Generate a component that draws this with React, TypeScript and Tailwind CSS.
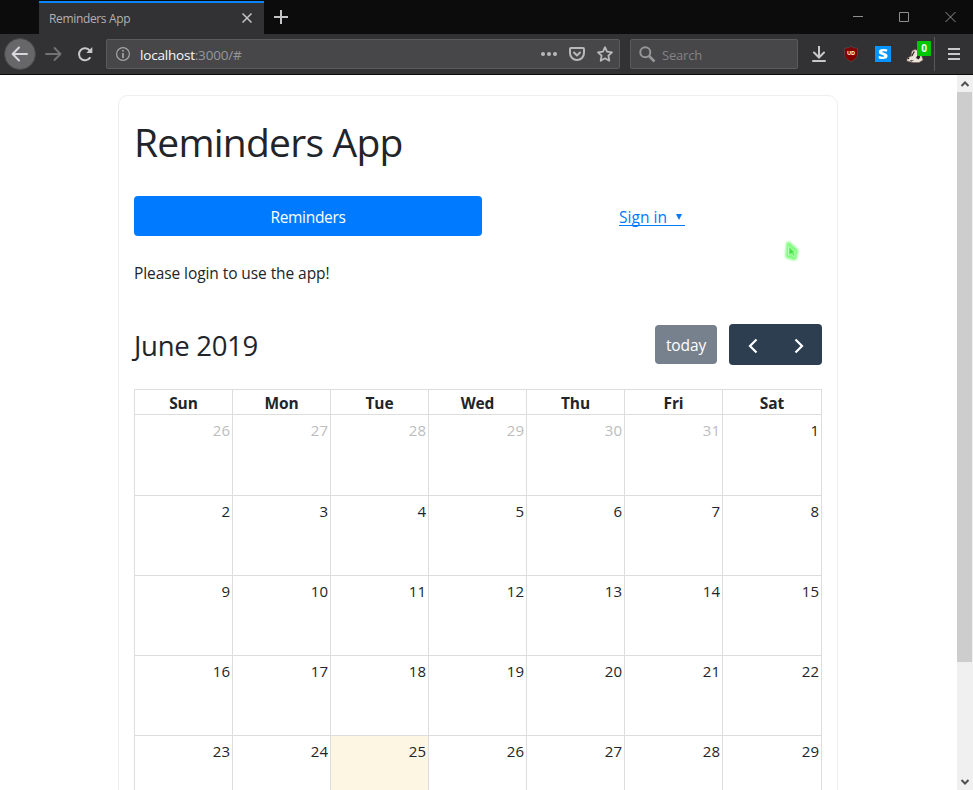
import React from "react";

const days = ["Sun", "Mon", "Tue", "Wed", "Thu", "Fri", "Sat"];
const weeks = [
  [26, 27, 28, 29, 30, 31, 1],
  [2, 3, 4, 5, 6, 7, 8],
  [9, 10, 11, 12, 13, 14, 15],
  [16, 17, 18, 19, 20, 21, 22],
  [23, 24, 25, 26, 27, 28, 29],
];

function TabStrip() {
  return (
    <div className="flex h-[34px] shrink-0 bg-[#0c0c0d]">
      <div className="ml-[39px] mt-px flex h-[33px] w-[225px] items-center justify-between border-t-2 border-[#0a84ff] bg-[#323234] pl-[10px] pr-3 text-[12px] text-[#b1b1b3]">
        <span className="tracking-[-0.35px]">Reminders App</span>
        <svg className="-mt-0.5" width="10" height="10" viewBox="0 0 10 10" stroke="#c4c4c6" strokeWidth="1.5">
          <path d="M.5.5l9 9M9.5.5l-9 9" />
        </svg>
      </div>
      <svg className="ml-[10px] mt-[10px]" width="14" height="14" viewBox="0 0 14 14" stroke="#c4c4c6" strokeWidth="2">
        <path d="M7 0v14M0 7h14" />
      </svg>
      <div className="ml-auto flex items-start">
        <svg className="mt-[11px] mr-[17px]" width="103" height="12" viewBox="0 0 103 12" fill="none" stroke="#8f8f90">
          <path d="M0 5.5h10" />
          <path d="M46.500 1.500h9v9h-9z" />
          <path d="M92.500 1l10 10M102.500 1l-10 10" />
        </svg>
      </div>
    </div>
  );
}

function Toolbar() {
  return (
    <div className="flex h-[41px] shrink-0 items-center border-b border-[#0c0c0d] bg-[#323234]">
      <div className="ml-1 flex size-8 items-center justify-center rounded-full border border-[#474749] bg-[#67676a]">
        <svg width="18" height="16" viewBox="0 0 18 16" fill="none" stroke="#d7d7db" strokeWidth="2" strokeLinecap="round" strokeLinejoin="round">
          <path d="M16 8H2M8 1.500L1.600 8L8 14.500" />
        </svg>
      </div>
      <svg className="ml-[9px]" width="18" height="16" viewBox="0 0 18 16" fill="none" stroke="#727274" strokeWidth="2" strokeLinecap="round" strokeLinejoin="round">
        <path d="M1 8h14M9.500 2L15.500 8L9.500 14" />
      </svg>
      <svg className="ml-[14px]" width="16" height="16" viewBox="0 0 16 16" fill="none" stroke="#c9c9cb" strokeWidth="2">
        <path d="M13.300 11.200A6 6 0 1 1 12.800 4.600" />
        <path d="M15.300 1v6H9.300z" fill="#c9c9cb" stroke="none" />
      </svg>
      <div className="ml-[13px] flex h-[30px] w-[514px] items-center rounded-[2px] border border-[#5b5b5d] bg-[#474749] pl-[9px] pr-[6px]">
        <svg width="14" height="14" viewBox="0 0 14 14" fill="none" stroke="#a5a5a7" strokeWidth="1.200">
          <circle cx="7" cy="7" r="6.400" />
          <path d="M7 3v1.600M7 6v5" strokeWidth="1.700" />
        </svg>
        <span className="ml-[10px] mt-[2px] text-[13.500px] tracking-[-0.2px] text-[#97979a]">
          <span className="text-[#f9f9fa]">localhost</span>:3000/#
        </span>
        <svg className="ml-auto" width="16" height="16" viewBox="0 0 16 16" fill="#b9b9bb">
          <circle cx="2" cy="8" r="2" />
          <circle cx="8" cy="8" r="2" />
          <circle cx="14" cy="8" r="2" />
        </svg>
        <svg className="ml-3" width="16" height="16" viewBox="0 0 16 16" fill="none" stroke="#b9b9bb" strokeWidth="2" strokeLinecap="round" strokeLinejoin="round">
          <path d="M2 2h12q1 0 1 1v4A7 7 0 0 1 1 7V3q0-1 1-1z" />
          <path d="M5 6.500l3 3l3-3" />
        </svg>
        <svg className="ml-3" width="16" height="16" viewBox="0 0 16 16" fill="none" stroke="#b9b9bb" strokeWidth="1.800" strokeLinejoin="round">
          <path d="M8 1.200l2 4.500l5 .6l-3.600 3.400l.9 5L8 12.300l-4.300 2.400l.9-5L1 6.300l5-.6z" />
        </svg>
      </div>
      <div className="ml-[10px] flex h-[30px] w-[168px] items-center rounded-[2px] border border-[#5b5b5d] bg-[#474749] pl-2">
        <svg width="17" height="17" viewBox="0 0 17 17" fill="none" stroke="#97979a" strokeWidth="2">
          <circle cx="6.300" cy="6.300" r="5" />
          <path d="M10 10l5.500 5.500" strokeWidth="2.500" />
        </svg>
        <span className="ml-[6px] mt-[3px] text-[13px] tracking-[-0.2px] text-[#828285]">Search</span>
      </div>
      <svg className="ml-[14px]" width="14" height="16" viewBox="0 0 14 16" fill="none" stroke="#c9c9cb" strokeWidth="2">
        <path d="M7 0v11M2 6.500L7 11.500L12 6.500M1 15h12" strokeLinecap="round" />
      </svg>
      <svg className="ml-[18px]" width="14" height="16" viewBox="0 0 14 16">
        <path d="M7 .4Q9.500 2.300 13.500 2.300V8Q13.500 13 7 15.600Q.5 13 .5 8V2.300Q4.500 2.300 7 .4z" fill="#800000" stroke="#555" strokeWidth=".6" />
        <text x="7" y="9.300" textAnchor="middle" fill="white" fontFamily="Open Sans, sans-serif" fontWeight="700" fontSize="5.500">UD</text>
      </svg>
      <div className="ml-[17px] flex size-4 items-center justify-center bg-[#0695ff] text-[14px] leading-none font-extrabold text-white">
        <span className="scale-x-125">S</span>
      </div>
      <div className="relative ml-4 h-[26px] w-6">
        <svg className="-ml-px mt-[7px]" width="18" height="16" viewBox="0 0 18 16">
          <path d="M1 10.500L5 8L6 3L9 1.500L13 3L16 9L17 12L13 14.500L7 14.500L1 13z" fill="#eae4dd" stroke="#8a6450" strokeWidth=".6" />
          <path d="M5 8.500L7.500 3.500L9 3.500L6.500 8zM10 10l2-4l2.500 3l-2 2.500z" fill="#2a2523" />
          <path d="M1 10.300l2.500-.5l-1 1.700zM4 12.300l4 .2l-3 .9z" fill="#171719" />
        </svg>
        <span className="absolute top-0 left-[10px] flex h-[15px] w-[14px] items-center justify-center rounded-[1px] bg-[#00c800] text-[10px] font-bold text-white">0</span>
      </div>
      <div className="ml-[3px] h-[34px] w-px bg-[#59595b]" />
      <svg className="ml-[13px]" width="12" height="12" viewBox="0 0 12 12" stroke="#c9c9cb" strokeWidth="2">
        <path d="M0 1h12M0 6h12M0 11h12" />
      </svg>
    </div>
  );
}

function Calendar() {
  return (
    <div className="mt-6 w-[688px] border-t border-l border-[#ddd]">
      <div className="grid h-[25px] grid-cols-[repeat(6,98px)_99px]">
        {days.map((d) => (
          <div key={d} className="border-r border-b border-[#ddd] pt-[3px] text-center text-[15.500px] leading-5 font-bold tracking-[-0.1px]">
            {d}
          </div>
        ))}
      </div>
      {weeks.map((week, row) => (
        <div key={row} className={`grid grid-cols-[repeat(6,98px)_99px] ${row === 0 ? "h-[81px]" : "h-20"}`}>
          {week.map((day, col) => (
            <div
              key={col}
              className={`border-r border-b border-[#ddd] pt-[3px] pr-0.5 text-right text-[15px] leading-6 ${row === 0 && col < 6 ? "text-[#bcbdbe]" : ""} ${day === 25 ? "bg-[#fdf6e3]" : ""}`}
            >
              {day}
            </div>
          ))}
        </div>
      ))}
    </div>
  );
}

function Scrollbar() {
  return (
    <div className="flex w-4 shrink-0 flex-col items-center bg-[#f0f0f0]">
      <svg className="h-[17px] w-4 shrink-0" viewBox="0 0 16 17" fill="none" stroke="#505050" strokeWidth="2">
        <path d="M4.500 11L8 7.500L11.500 11" />
      </svg>
      <div className="mr-px h-[570px] w-[15px] bg-[#cdcdcd]" />
      <svg className="mt-auto h-[17px] w-4 shrink-0" viewBox="0 0 16 17" fill="none" stroke="#505050" strokeWidth="2">
        <path d="M4.500 7L8 10.500L11.500 7" />
      </svg>
    </div>
  );
}

export default function App() {
  return (
    <div className="flex h-[790px] w-[973px] flex-col overflow-hidden bg-white font-['Open_Sans',sans-serif] text-[#212529]">
      <TabStrip />
      <Toolbar />
      <div className="flex min-h-0 flex-1">
        <main className="relative min-w-0 flex-1 overflow-hidden">
          <div className="ml-[118px] mt-5 h-[900px] w-[720px] rounded-[10px] border border-[#eee] px-[15px] pt-[22px]">
            <h1 className="text-[39px] leading-[48px] tracking-[-0.77px]">Reminders App</h1>
            <div className="mt-[30px] flex">
              <a className="flex h-10 w-[348px] items-center justify-center rounded-[4px] bg-[#007bff] pt-[3px] text-[15.500px] tracking-[-0.3px] text-white">Reminders</a>
              <div className="flex flex-1 items-center justify-center">
                <a className="mt-px flex h-[18px] items-center border-b border-[#007bff] text-[15.500px] tracking-[0px] text-[#007bff]">
                  <span className="mt-[3px]">Sign in</span>
                  <svg className="mt-px mr-[3px] ml-[9px]" width="6" height="6" viewBox="0 0 6 6" fill="#007bff"><path d="M0 0h6L3 6z" /></svg>
                </a>
              </div>
            </div>
            <p className="mt-[25px] text-[15.500px] leading-6 tracking-[-0.08px]">Please login to use the app!</p>
            <div className="mt-[39px] flex h-[41px] items-center">
              <h2 className="mt-[3px] text-[27.500px] tracking-[-0.3px]">June 2019</h2>
              <button className="ml-auto flex h-[39px] w-[62px] items-center justify-center rounded-[4px] bg-[#76818d] pt-[2px] text-[15.500px] tracking-[-0.1px] text-white">today</button>
              <div className="ml-3 flex h-[41px] w-[93px] items-center justify-center gap-[36px] rounded-[4px] bg-[#2c3e50] pt-[3px]">
                <svg width="10" height="16" viewBox="0 0 10 16" fill="none" stroke="white" strokeWidth="2.200"><path d="M8.500 1.500L2 8L8.500 14.500" /></svg>
                <svg width="10" height="16" viewBox="0 0 10 16" fill="none" stroke="white" strokeWidth="2.200"><path d="M1.500 1.500L8 8L1.500 14.500" /></svg>
              </div>
            </div>
            <Calendar />
          </div>
          <svg className="absolute top-[161px] left-[777px]" width="30" height="30" viewBox="0 0 30 30">
            <defs>
              <filter id="glow" x="-50%" y="-50%" width="200%" height="200%"><feGaussianBlur stdDeviation="1.200" /></filter>
            </defs>
            <path d="M11.500 8L19 15L17.500 22L10.500 20z" fill="#7dfc7d" stroke="#7dfc7d" strokeWidth="4.500" strokeLinejoin="round" filter="url(#glow)" />
            <path d="M11.500 10V19.500L14.500 18L16.500 21L18 20L17 17L19 16.500z" fill="#66f066" stroke="#b5ffb0" strokeWidth="1" />
            <path d="M13 13.500v4l3-1.500z" fill="#45da45" />
          </svg>
        </main>
        <Scrollbar />
      </div>
    </div>
  );
}
